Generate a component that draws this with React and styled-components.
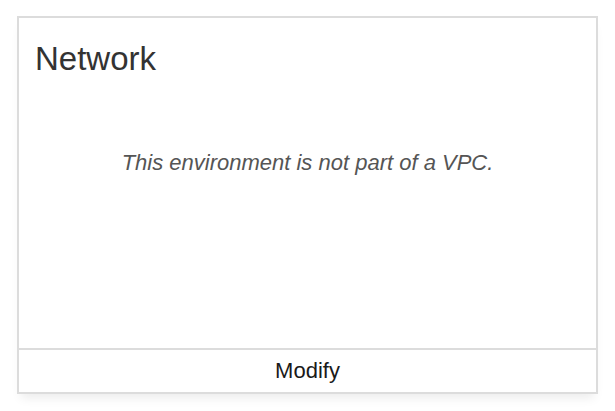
import React from 'react';
import styled, { createGlobalStyle } from 'styled-components';

const GlobalStyle = createGlobalStyle`
  body {
    margin: 0;
    background: #fff;
    font-family: "Liberation Sans", Arial, sans-serif;
  }
`;

const Page = styled.div`
  padding: 16px 17px;
`;

const Card = styled.div`
  width: 581px;
  height: 378px;
  box-sizing: border-box;
  border: 2px solid #dcdcdc;
  background: #fff;
  box-shadow: 0 8px 10px -4px rgba(0, 0, 0, 0.08);
  display: flex;
  flex-direction: column;
`;

const Body = styled.div`
  flex: 1;
  padding: 23px 16px 0 16px;
`;

const Title = styled.h2`
  margin: 0;
  font-size: 33px;
  font-weight: 400;
  color: #333;
  line-height: 36px;
`;

const Message = styled.p`
  margin: 73px 0 0;
  text-align: center;
  font-style: italic;
  font-size: 22px;
  line-height: 26px;
  color: #555;
`;

const Footer = styled.button`
  height: 44px;
  border: none;
  border-top: 2px solid #dcdcdc;
  background: #fff;
  font-family: inherit;
  font-size: 22px;
  color: #1a1a1a;
  cursor: pointer;
  padding: 0;
`;

export default function App() {
  return (
    <>
      <GlobalStyle />
      <Page>
        <Card>
          <Body>
            <Title>Network</Title>
            <Message>This environment is not part of a VPC.</Message>
          </Body>
          <Footer>Modify</Footer>
        </Card>
      </Page>
    </>
  );
}
